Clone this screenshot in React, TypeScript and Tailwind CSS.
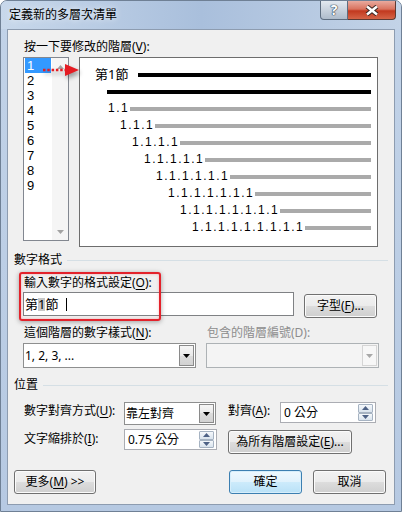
import React from "react";

const FONT = "font-['Noto_Sans','Noto_Sans_CJK_TC',sans-serif]";

function Mn({ children }: { children: React.ReactNode }) {
  return <span className="underline underline-offset-2">{children}</span>;
}

function WinButton({
  children,
  className = "",
  primary = false,
}: {
  children: React.ReactNode;
  className?: string;
  primary?: boolean;
}) {
  return (
    <div
      className={`flex items-center justify-center rounded-[3px] border text-[12px] leading-[16px] text-black ${
        primary
          ? "border-[#3c7fb1] bg-[linear-gradient(to_bottom,#eef8fe_0%,#e0f2fc_50%,#cdebfb_50%,#b9e1f7_100%)] shadow-[inset_0_0_0_1px_#d6eefb]"
          : "border-[#707070] bg-[linear-gradient(to_bottom,#f2f2f2_0%,#ebebeb_50%,#dddddd_50%,#cfcfcf_100%)] shadow-[inset_0_0_0_1px_#fbfbfb]"
      } ${className}`}
    >
      {children}
    </div>
  );
}

function DropArrow({ color = "#000" }: { color?: string }) {
  return (
    <svg width="7" height="4" viewBox="0 0 7 4">
      <polygon points="0,0 7,0 3.5,4" fill={color} />
    </svg>
  );
}

function Combo({
  value,
  className = "",
  disabled = false,
}: {
  value: string;
  className?: string;
  disabled?: boolean;
}) {
  return (
    <div
      className={`flex border ${
        disabled ? "border-[#adb2b5] bg-[#f4f4f4]" : "border-[#8e8f8f] bg-white"
      } ${className}`}
    >
      <div className="flex flex-1 items-center pl-[1px] text-[12px] leading-[16px] text-black">
        {value}
      </div>
      <div
        className={`m-[1px] flex w-[15px] items-center justify-center border ${
          disabled
            ? "border-[#d5d5d5] bg-[#f7f7f7]"
            : "border-[#8a8a8a] bg-[linear-gradient(to_bottom,#f6f6f6_0%,#e9e9e9_50%,#dcdcdc_50%,#d2d2d2_100%)]"
        }`}
      >
        <DropArrow color={disabled ? "#a8a8a8" : "#000"} />
      </div>
    </div>
  );
}

function SpinHalf({ up }: { up: boolean }) {
  return (
    <div className="flex flex-1 items-center justify-center rounded-[1px] border border-[#a6b3c2] bg-linear-to-b from-[#f5f8fb] to-[#d9e3ed]">
      <svg width="7" height="4" viewBox="0 0 7 4">
        <polygon points={up ? "0,4 7,4 3.5,0" : "0,0 7,0 3.5,4"} fill="#4d6185" />
      </svg>
    </div>
  );
}

function Spin({ value, className = "" }: { value: string; className?: string }) {
  return (
    <div className={`flex h-[21px] border border-[#abadb3] bg-white ${className}`}>
      <div className="flex flex-1 items-center pl-[3px] text-[12px] leading-[16px] text-black">
        {value}
      </div>
      <div className="my-[1px] mr-[2px] flex w-[15px] flex-col">
        <SpinHalf up />
        <SpinHalf up={false} />
      </div>
    </div>
  );
}

function GroupHeader({ label, className = "" }: { label: string; className?: string }) {
  return (
    <div className={`flex h-[16px] items-center pl-[6px] pr-[6px] ${className}`}>
      <span className="text-[12px] leading-[16px] text-black">{label}</span>
      <div className="ml-[5px] h-px flex-1 bg-[#d5dfe5]" />
    </div>
  );
}

const levels = [
  { text: "1.1", pad: "pl-[28px]" },
  { text: "1.1.1", pad: "pl-[40px]" },
  { text: "1.1.1.1", pad: "pl-[52px]" },
  { text: "1.1.1.1.1", pad: "pl-[64px]" },
  { text: "1.1.1.1.1.1", pad: "pl-[76px]" },
  { text: "1.1.1.1.1.1.1", pad: "pl-[88px]" },
  { text: "1.1.1.1.1.1.1.1", pad: "pl-[100px]" },
  { text: "1.1.1.1.1.1.1.1.1", pad: "pl-[112px]" },
];

export default function App() {
  return (
    <div
      className={`${FONT} relative h-[512px] w-[402px] overflow-hidden rounded-t-[7px] border border-[#6f8095] bg-linear-to-b from-[#c2d3e8] to-[#b6c9e2]`}
    >
      {/* title bar */}
      <div className="flex h-[28px] bg-linear-to-r from-[#c8d8eb] via-[#a9bfdc] to-[#c3d3e7]">
        <div className="pl-[8px] pt-[6px] text-[12px] leading-[16px] text-black [text-shadow:0_0_6px_rgba(255,255,255,0.9)]">
          定義新的多層次清單
        </div>
        <div className="ml-auto mr-[5px] flex h-[19px]">
          <div className="flex w-[28px] items-center justify-center rounded-bl-[4px] border border-t-0 border-[#5d6d80] bg-linear-to-b from-[#e3e9f0] to-[#aebbcb] text-[14px] font-bold leading-none text-white [text-shadow:0_0_1px_#27374a,0_0_1px_#27374a,0_0_1px_#27374a]">
            ?
          </div>
          <div className="flex w-[48px] items-center justify-center rounded-br-[4px] border border-l-0 border-t-0 border-[#5d3a33] bg-[linear-gradient(to_bottom,#e9aa9e_0%,#d9735f_45%,#c2391f_55%,#d56447_100%)]">
            <svg width="14" height="11" viewBox="0 0 14 11">
              <path d="M2 1.5 L12 9.5 M12 1.5 L2 9.5" stroke="#3a2622" strokeWidth="4.5" />
              <path d="M2 1.5 L12 9.5 M12 1.5 L2 9.5" stroke="#ffffff" strokeWidth="2.5" />
            </svg>
          </div>
        </div>
      </div>

      {/* client area */}
      <div className="mx-[6px] h-[476px] border border-[#8d9cb0] bg-[#f0f0f0] text-black">
        <div className="pl-[16px] pt-[9px] text-[12px] leading-[16px]">
          按一下要修改的階層(<Mn>V</Mn>):
        </div>

        <div className="relative mt-[2px] flex">
          {/* level list */}
          <div className="ml-[15px] flex h-[184px] w-[46px] border border-[#828790] bg-white">
            <div className="flex-1 px-[1px]">
              {["1", "2", "3", "4", "5", "6", "7", "8", "9"].map((n, i) => (
                <div
                  key={n}
                  className={`h-[15px] pl-[2px] font-['Liberation_Sans',sans-serif] text-[13px] leading-[15px] ${
                    i === 0 ? "bg-[#3399ff] text-white" : "text-black"
                  }`}
                >
                  {n}
                </div>
              ))}
            </div>
            <div className="flex w-[16px] flex-col justify-between bg-[#f5f5f5]">
              <div className="flex h-[17px] items-center justify-center">
                <svg width="7" height="4" viewBox="0 0 7 4">
                  <polygon points="0,4 7,4 3.5,0" fill="#a3a3a3" />
                </svg>
              </div>
              <div className="flex h-[17px] items-center justify-center">
                <DropArrow color="#a3a3a3" />
              </div>
            </div>
          </div>

          {/* preview */}
          <div className="ml-[10px] h-[190px] w-[299px] border border-[#6d6d6d] bg-white pr-[6px] pt-[8px]">
            <div className="flex h-[17px] items-center pl-[15px]">
              <span className="text-[13px] leading-[17px] text-black">第1節</span>
              <div className="ml-[10px] h-[4px] flex-1 bg-black" />
            </div>
            <div className="flex h-[17px] items-center pl-[27px]">
              <div className="h-[4px] flex-1 bg-black" />
            </div>
            {levels.map((l) => (
              <div key={l.text} className={`flex h-[17px] items-center ${l.pad}`}>
                <span className="font-['Liberation_Sans',sans-serif] text-[12px] leading-[17px] tracking-[1.5px] text-black">
                  {l.text}
                </span>
                <div className="ml-[1px] h-[4px] flex-1 bg-[#aaaaaa]" />
              </div>
            ))}
          </div>

          {/* red pointer */}
          <svg
            className="absolute left-[34px] top-[6px] drop-shadow-[2px_3px_2px_rgba(0,0,0,0.35)]"
            width="38"
            height="14"
            viewBox="0 0 38 14"
          >
            <line x1="1" y1="7" x2="24" y2="7" stroke="#e51c23" strokeWidth="2.5" strokeDasharray="2.5 1.8" />
            <polygon points="23,1 37,7 23,13" fill="#e51c23" />
          </svg>
        </div>

        {/* number format */}
        <GroupHeader label="數字格式" className="mt-[5px]" />
        <div className="relative">
          <div className="pointer-events-none absolute left-[11px] top-[4px] h-[49px] w-[142px] rounded-[3px] border-2 border-[#e3222b] shadow-[0_1px_5px_rgba(0,0,0,0.35),inset_0_0_3px_rgba(227,34,43,0.3)]" />
          <div className="pl-[16px] pt-[7px] text-[12px] leading-[16px]">
            輸入數字的格式設定(<Mn>O</Mn>):
          </div>
          <div className="mt-[1px] flex h-[26px] items-start">
            <div className="ml-[15px] flex h-[24px] w-[271px] items-center border border-[#7f8184] bg-white pl-[1px]">
              <span className="text-[13px] leading-[17px]">第</span>
              <span className="bg-[#c7c7c7] text-[13px] leading-[13px]">1</span>
              <span className="text-[13px] leading-[17px]">節</span>
              <span className="ml-[8px] h-[13px] w-px bg-black" />
            </div>
            <WinButton className="ml-[10px] mt-[2px] h-[24px] w-[73px]">
              字型(<Mn>F</Mn>)...
            </WinButton>
          </div>
          <div className="mt-[7px] flex pl-[15px]">
            <div className="w-[173px]">
              <div className="pl-[1px] text-[12px] leading-[16px]">
                這個階層的數字樣式(<Mn>N</Mn>):
              </div>
              <Combo value="1, 2, 3, ..." className="mt-[2px] h-[25px]" />
            </div>
            <div className="ml-[10px] w-[173px]">
              <div className="pl-[1px] text-[12px] leading-[16px] text-[#8d8d8d]">
                包含的階層編號(D):
              </div>
              <Combo value="" disabled className="mt-[2px] h-[25px]" />
            </div>
          </div>
        </div>

        {/* position */}
        <GroupHeader label="位置" className="mt-[9px]" />
        <div className="mt-[9px] flex items-start pl-[16px]">
          <div className="h-[23px] w-[100px] pt-[1px] text-[12px] leading-[16px]">
            數字對齊方式(<Mn>U</Mn>):
          </div>
          <Combo value="靠左對齊" className="h-[23px] w-[92px]" />
          <div className="ml-[12px] h-[23px] w-[52px] pt-[1px] text-[12px] leading-[16px]">
            對齊(<Mn>A</Mn>):
          </div>
          <Spin value="0 公分" className="w-[96px]" />
        </div>
        <div className="mt-[4px] flex items-start pl-[16px]">
          <div className="h-[21px] w-[100px] pt-[2px] text-[12px] leading-[16px]">
            文字縮排於(<Mn>I</Mn>):
          </div>
          <Spin value="0.75 公分" className="w-[93px]" />
          <WinButton className="ml-[11px] mt-[1px] h-[24px] w-[124px]">
            為所有階層設定(<Mn>E</Mn>)...
          </WinButton>
        </div>

        <div className="mt-[16px] flex pr-[8px]">
          <WinButton className="ml-[6px] h-[24px] w-[82px]">
            更多(<Mn>M</Mn>) &gt;&gt;
          </WinButton>
          <WinButton primary className="ml-auto h-[24px] w-[73px]">
            確定
          </WinButton>
          <WinButton className="ml-[11px] h-[24px] w-[73px]">取消</WinButton>
        </div>
      </div>
    </div>
  );
}
